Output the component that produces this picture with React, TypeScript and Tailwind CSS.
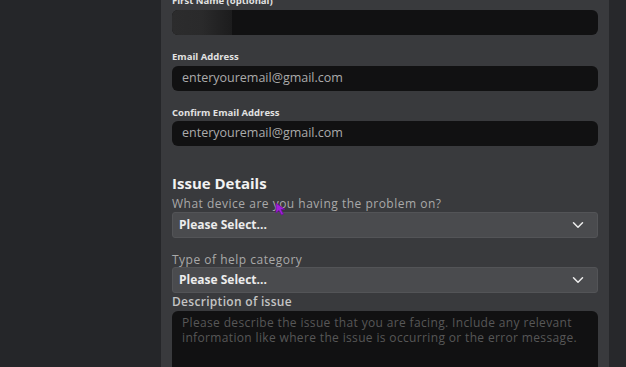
import { ChevronDown } from "lucide-react";

const font = { fontFamily: '"Open Sans", "Noto Sans", sans-serif' };

function SmallLabel({ children }: { children: string }) {
  return (
    <div className="text-[9.5px] font-bold leading-[12px] text-[#e2e2e2]">{children}</div>
  );
}

function TextBox({ value, blurred }: { value?: string; blurred?: boolean }) {
  return (
    <div className="relative flex h-[25px] items-center rounded-[6px] bg-[#111112] px-[10px] text-[12.5px] text-[#ababab]">
      {blurred && (
        <div className="absolute inset-y-0 left-0 w-[60px] rounded-l-[6px] bg-gradient-to-r from-[#2c2c2d] via-[#2a2a2b] to-[#1c1c1d]" />
      )}
      {value}
    </div>
  );
}

function Select() {
  return (
    <div className="flex h-[26px] items-center justify-between rounded-[3px] border border-[#535457] bg-[#4a4b4e] pl-[6px] pr-[10px]">
      <span className="text-[12px] font-bold text-[#ececec]">Please Select...</span>
      <ChevronDown size={18} strokeWidth={2} color="#ededed" />
    </div>
  );
}

export default function App() {
  return (
    <div className="flex h-[367px] w-[626px] overflow-hidden bg-[#25262a]" style={font}>
      <div className="w-[161px] shrink-0 bg-[#252629]" />

      <div className="relative flex-1 bg-[#393a3d] px-[11px]">
        <div className="mt-[-5px] flex flex-col">
          <div className="mb-[3px]">
            <SmallLabel>First Name (optional)</SmallLabel>
          </div>
          <TextBox blurred />

          <div className="mb-[3px] mt-[16px]">
            <SmallLabel>Email Address</SmallLabel>
          </div>
          <TextBox value="enteryouremail@gmail.com" />

          <div className="mb-[2px] mt-[16px]">
            <SmallLabel>Confirm Email Address</SmallLabel>
          </div>
          <TextBox value="enteryouremail@gmail.com" />

          <h2 className="mt-[27px] text-[15px] font-bold leading-[20px] text-[#f2f2f2]">Issue Details</h2>
          <div className="mb-[1px] mt-[4px] text-[12px] font-medium leading-[14px] tracking-[0.5px] text-[#a9a9a9]">
            What device are you having the problem on?
          </div>
          <Select />

          <div className="mt-[15px] text-[12px] font-medium leading-[14px] tracking-[0.5px] text-[#a9a9a9]">
            Type of help category
          </div>
          <Select />

          <div className="mb-[2px] mt-[2px] text-[12px] font-semibold leading-[14px] tracking-[0.3px] text-[#c4c4c4]">
            Description of issue
          </div>
          <div className="h-[90px] rounded-[6px] bg-[#111112] px-[10px] pt-[4px] text-[12px] leading-[15px] tracking-[0.35px] text-[#575757]">
            Please describe the issue that you are facing. Include any relevant information like where the issue is
            occurring or the error message.
          </div>
        </div>

        {/* mouse pointer */}
        <svg className="absolute left-[114px] top-[202px]" width="12" height="14" viewBox="0 0 12 14">
          <polygon points="1,1 1,11 4,8.5 6.5,13 8.5,12 6,7.5 10,7.5" fill="#a020d8" stroke="#6a0f96" strokeWidth="0.8" />
        </svg>
      </div>

      <div className="w-[17px] shrink-0 bg-[#27282b]" />
    </div>
  );
}
